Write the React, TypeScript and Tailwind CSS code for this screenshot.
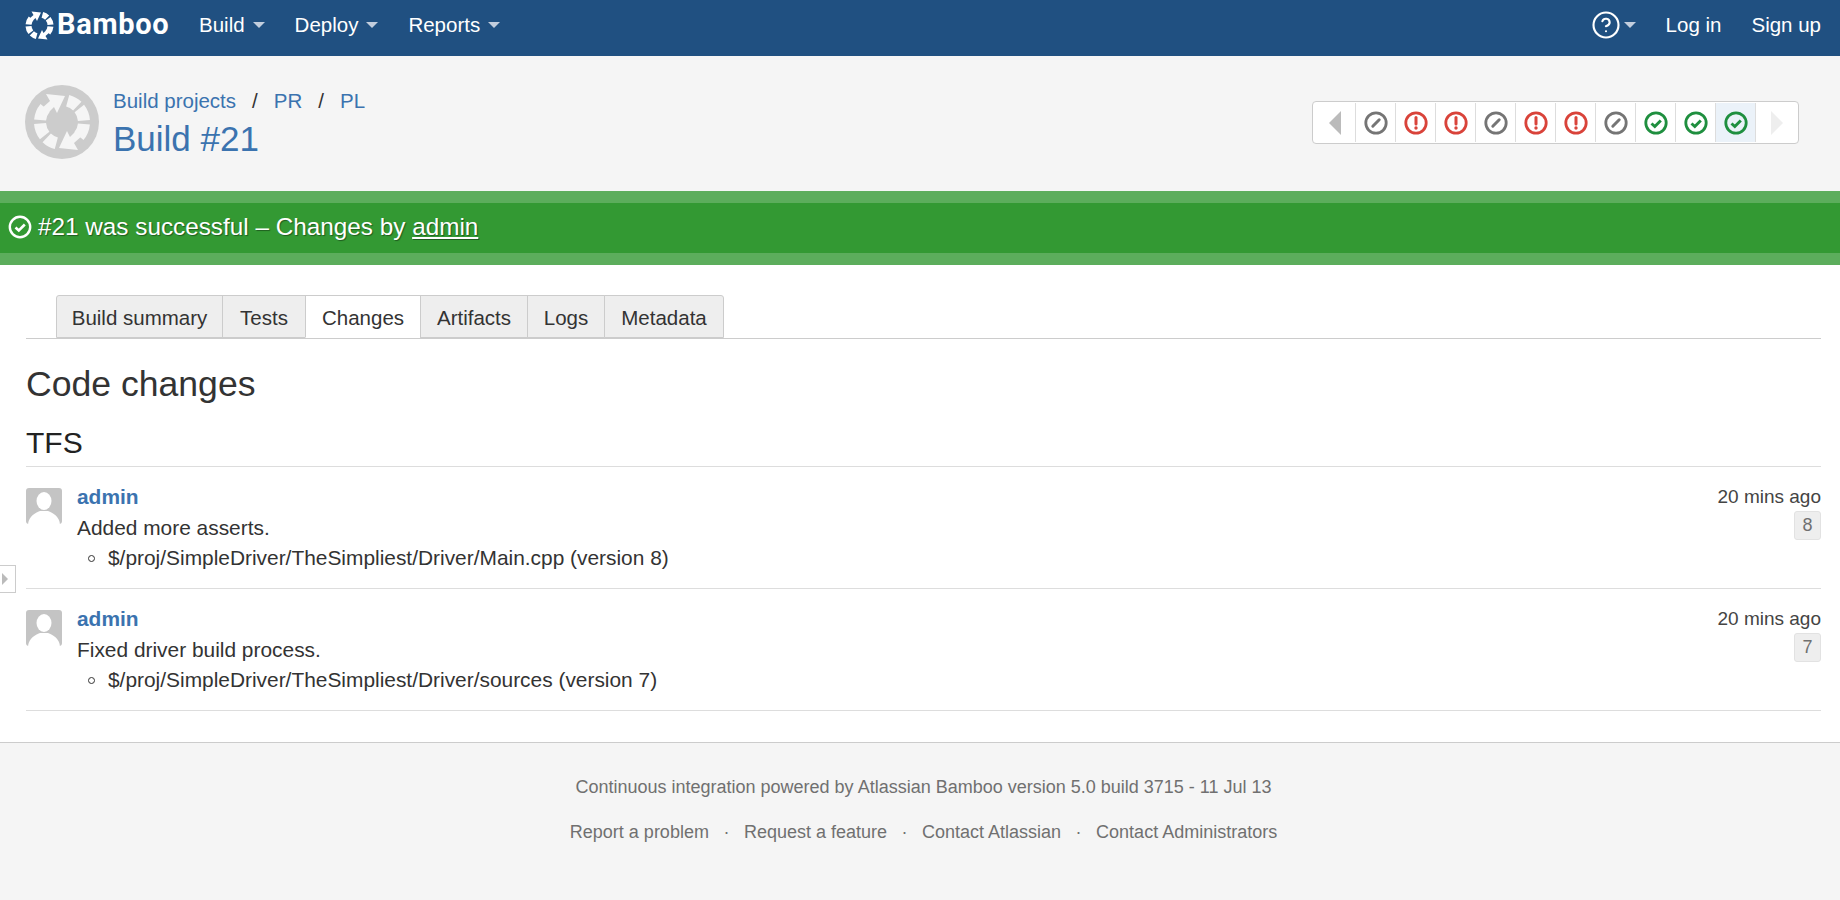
import { CircleHelp } from "lucide-react";

type TStatus = "skip" | "fail" | "ok";

const NAV = ["Build", "Deploy", "Reports"];
const TABS = [
    { label: "Build summary", width: "w-[167px]" },
    { label: "Tests", width: "w-[84px]" },
    { label: "Changes", width: "w-[116px]" },
    { label: "Artifacts", width: "w-[108px]" },
    { label: "Logs", width: "w-[78px]" },
    { label: "Metadata", width: "w-[120px]" },
];
const HISTORY: TStatus[] = ["skip", "fail", "fail", "skip", "fail", "fail", "skip", "ok", "ok", "ok"];
const CHANGES = [
    { message: "Added more asserts.", file: "$/proj/SimpleDriver/TheSimpliest/Driver/Main.cpp (version 8)", rev: "8" },
    { message: "Fixed driver build process.", file: "$/proj/SimpleDriver/TheSimpliest/Driver/sources (version 7)", rev: "7" },
];
const FOOTER_LINKS = ["Report a problem", "Request a feature", "Contact Atlassian", "Contact Administrators"];

// ring segments, degrees clockwise from north
const SEGMENTS = [
    [15, 44],
    [52, 86],
    [95, 130],
    [195, 224],
    [232, 266],
    [275, 310],
];

function segmentPath(from: number, to: number) {
    const point = (r: number, a: number) => {
        const rad = (a * Math.PI) / 180;
        return `${(37 + r * Math.sin(rad)).toFixed(2)} ${(37 - r * Math.cos(rad)).toFixed(2)}`;
    };
    return `M${point(16, from)}L${point(28, from)}A28 28 0 0 1 ${point(28, to)}L${point(16, to)}A16 16 0 0 0 ${point(16, from)}Z`;
}

function BambooMark({ className, fill, viewBox }: { className: string; fill: string; viewBox: string }) {
    const arrow = "M21 9L40 11L32 28L29 22L21 30L16 24L25 16Z";
    return (
        <svg viewBox={viewBox} className={className}>
            {SEGMENTS.map(([from, to]) => (
                <path key={from} d={segmentPath(from, to)} fill={fill} />
            ))}
            <path d={arrow} fill={fill} />
            <path d={arrow} fill={fill} transform="rotate(180 37 37)" />
        </svg>
    );
}

function Caret({ className = "ml-[8px]" }: { className?: string }) {
    return <span className={`${className} inline-block w-0 h-0 border-x-[6px] border-x-transparent border-t-[6px] border-t-[#c2cede]`} />;
}

function StatusIcon({ status, className }: { status: TStatus; className: string }) {
    const color = status === "skip" ? "#757575" : status === "fail" ? "#d9433a" : "#1f8f3f";
    return (
        <svg viewBox="0 0 24 24" className={className} fill="none">
            <circle cx="12" cy="12" r="10.2" stroke={color} strokeWidth="2.8" />
            {status === "skip" && <path d="M8.8 15.2L15.2 8.8" stroke={color} strokeWidth="3" strokeLinecap="round" />}
            {status === "fail" && (
                <>
                    <path d="M12 6.5V13" stroke={color} strokeWidth="3" strokeLinecap="round" />
                    <circle cx="12" cy="17" r="1.7" fill={color} />
                </>
            )}
            {status === "ok" && <path d="M7.5 12.5L10.8 15.5L16.8 9.5" stroke={color} strokeWidth="3" />}
        </svg>
    );
}

function Avatar() {
    return (
        <div className="w-9 h-9 rounded-[3px] bg-[#c4c4c4] overflow-hidden shrink-0">
            <svg viewBox="0 0 36 36" className="w-9 h-9" fill="#fff">
                <ellipse cx="18" cy="13" rx="7.5" ry="9" />
                <path d="M2 36C3 28 9 25 14 23H22C27 25 33 28 34 36Z" />
            </svg>
        </div>
    );
}

export default function App() {
    return (
        <div className="relative min-h-screen flex flex-col bg-white text-[20.5px] text-[#333] font-['Liberation_Sans',Arial,sans-serif]">
            <header className="h-14 shrink-0 bg-[#205081] text-white flex items-center pl-[25px] pr-[19px] pb-[6px]">
                <BambooMark className="w-[29px] h-[29px]" fill="#fff" viewBox="8 8 58 58" />
                <span className="ml-[3px] w-[112px] text-[29px] font-bold tracking-[0.7px] font-['Roboto',sans-serif]">Bamboo</span>
                <nav className="flex items-center ml-[30px] gap-[30px]">
                    {NAV.map((item) => (
                        <div key={item} className="flex items-center">
                            {item}
                            <Caret />
                        </div>
                    ))}
                </nav>
                <div className="ml-auto flex items-center">
                    <CircleHelp className="w-[30px] h-[30px]" strokeWidth={1.7} />
                    <Caret className="ml-[3px]" />
                    <span className="ml-[30px]">Log in</span>
                    <span className="ml-[30px]">Sign up</span>
                </div>
            </header>

            <div className="h-[135px] shrink-0 bg-[#f5f5f5] flex items-center pl-[25px] pr-[41px] pb-[4px]">
                <div className="w-[74px] h-[74px] rounded-full bg-[#cccccc]">
                    <BambooMark className="w-[74px] h-[74px]" fill="#f5f5f5" viewBox="0 0 74 74" />
                </div>
                <div className="pl-[14px] mt-[4px]">
                    <div className="flex items-center h-[30px] pt-[2px] text-[#3b73af]">
                        Build projects
                        <span className="mx-[16px] text-[#333]">/</span>
                        PR
                        <span className="mx-[16px] text-[#333]">/</span>
                        PL
                    </div>
                    <h1 className="text-[35px] leading-[46px] text-[#3b73af]">Build #21</h1>
                </div>
                <div className="ml-auto mt-[2px] h-[43px] flex items-stretch bg-white border border-[#cccccc] rounded-[4px] p-[1px]">
                    <div className="w-[42px] flex items-center justify-center border-r border-[#dddddd]">
                        <span className="w-0 h-0 border-y-[12px] border-y-transparent border-r-[12px] border-r-[#bbbbbb]" />
                    </div>
                    {HISTORY.map((status, i) => (
                        <div
                            key={i}
                            className={`w-[40px] flex items-center justify-center border-r border-[#dddddd] ${
                                i === HISTORY.length - 1 ? "bg-[#ebf2f9]" : ""
                            }`}
                        >
                            <StatusIcon status={status} className="w-6 h-6" />
                        </div>
                    ))}
                    <div className="w-[41px] flex items-center justify-center">
                        <span className="w-0 h-0 border-y-[12px] border-y-transparent border-l-[12px] border-l-[#eeeeee]" />
                    </div>
                </div>
            </div>

            <div className="h-[74px] shrink-0 bg-[#339933] border-y-[12px] border-[#5cad5c] flex items-center pl-[8px] pb-[1px] text-white text-[24.3px] [text-shadow:1px_1px_1px_rgba(0,0,0,0.4)]">
                <svg viewBox="0 0 24 24" className="w-6 h-6 -mt-[2px]" fill="none">
                    <circle cx="12" cy="12" r="10.2" stroke="#fff" strokeWidth="2.4" />
                    <path d="M7.5 12.5L10.8 15.5L16.8 9.5" stroke="#fff" strokeWidth="2.6" />
                </svg>
                <span className="ml-[6px]">
                    #21 was successful – Changes by <span className="underline">admin</span>
                </span>
            </div>

            <main className="flex-1 pl-[26px] pr-[19px] pt-[31px] pb-[31px]">
                <div className="flex items-end pl-[30px] h-[43px] border-b border-[#cccccc]">
                    {TABS.map((tab, i) => (
                        <div
                            key={tab.label}
                            className={`${tab.width} h-[43px] pt-[3px] flex items-center justify-center border border-[#cccccc] -ml-[1px] first:ml-0 ${
                                tab.label === "Changes"
                                    ? "bg-white border-b-white"
                                    : "bg-[#eeeeee]"
                            } ${i === 0 ? "rounded-tl-[3px]" : ""} ${i === TABS.length - 1 ? "rounded-tr-[3px]" : ""}`}
                        >
                            {tab.label}
                        </div>
                    ))}
                </div>
                <h2 className="text-[35.6px] leading-[44px] mt-[23px]">Code changes</h2>
                <h3 className="text-[30px] leading-[40px] mt-[17px] text-[#222]">TFS</h3>
                <div className="mt-[3px] border-t border-[#dddddd]">
                    {CHANGES.map((change) => (
                        <div key={change.rev} className="h-[122px] border-b border-[#dddddd] flex pt-[21px]">
                            <Avatar />
                            <div className="ml-[15px] flex-1 text-[20.9px] leading-[30.5px] -mt-[6px]">
                                <div className="font-bold text-[#3b73af]">admin</div>
                                <div>{change.message}</div>
                                <ul className="flex items-center">
                                    <li className="flex items-center">
                                        <span className="ml-[11px] w-[7px] h-[7px] rounded-full border border-[#333]" />
                                        <span className="ml-[13px]">{change.file}</span>
                                    </li>
                                </ul>
                            </div>
                            <div className="flex flex-col items-end -mt-[6px]">
                                <div className="text-[19px] leading-[29px] text-[#444]">20 mins ago</div>
                                <span className="w-[27px] h-[29px] flex items-center justify-center bg-[#eeeeee] border border-[#e2e2e2] rounded-[3px] text-[18px] text-[#707070]">
                                    {change.rev}
                                </span>
                            </div>
                        </div>
                    ))}
                </div>
            </main>

            <footer className="h-[159px] shrink-0 bg-[#f5f5f5] border-t border-[#cccccc] text-[18px] text-[#707070] flex flex-col items-center pt-[31px] pl-[7px]">
                <div className="leading-[26px]">Continuous integration powered by Atlassian Bamboo version 5.0 build 3715 - 11 Jul 13</div>
                <div className="mt-[19px] leading-[26px] flex items-center">
                    {FOOTER_LINKS.map((link, i) => (
                        <span key={link} className="flex items-center">
                            {i > 0 && <span className="mx-[14.5px]">·</span>}
                            {link}
                        </span>
                    ))}
                </div>
            </footer>

            <div className="absolute left-0 top-[565px] w-[16px] h-[28px] bg-white border border-l-0 border-[#cccccc] flex items-center pl-[2px]">
                <span className="w-0 h-0 border-y-[6px] border-y-transparent border-l-[6px] border-l-[#bbbbbb]" />
            </div>
        </div>
    );
}
